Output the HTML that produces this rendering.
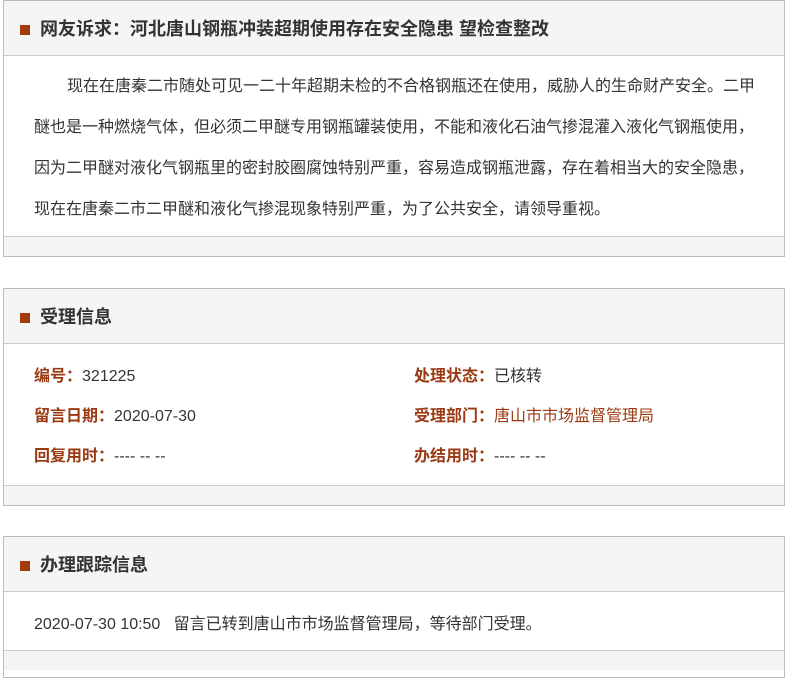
<!DOCTYPE html>
<html><head><meta charset="utf-8"><style>
body{margin:0;background:#fff;font-family:"Liberation Sans","Noto Sans CJK SC",sans-serif;color:#333;width:790px;height:660px;overflow:hidden;position:relative}
.p{position:absolute;left:3px;width:780px;border:1px solid #bbb;background:#fff}
.h{height:54px;background:#f5f5f5;border-bottom:1px solid #ccc;position:relative;font-size:18px;font-weight:bold;color:#333;line-height:56px;padding-left:36px}
.h:before{content:"";position:absolute;left:16px;top:24px;width:10px;height:10px;background:#a33a0b}
.f{height:19px;background:#f5f5f5;border-top:1px solid #ccc}
.t{font-size:16px;line-height:41px;padding:10px 26px 6px 30px;text-indent:33px}
.r{position:absolute;font-size:16px;white-space:nowrap}
.l{color:#9b3a12;font-weight:bold}
</style></head><body>
<div class="p" style="top:0;height:255px">
<div class="h">网友诉求：河北唐山钢瓶冲装超期使用存在安全隐患 望检查整改</div>
<div class="t" style="height:164px">现在在唐秦二市随处可见一二十年超期未检的不合格钢瓶还在使用，威胁人的生命财产安全。二甲醚也是一种燃烧气体，但必须二甲醚专用钢瓶罐装使用，不能和液化石油气掺混灌入液化气钢瓶使用，因为二甲醚对液化气钢瓶里的密封胶圈腐蚀特别严重，容易造成钢瓶泄露，存在着相当大的安全隐患，现在在唐秦二市二甲醚和液化气掺混现象特别严重，为了公共安全，请领导重视。</div>
<div class="f" style="position:absolute;left:0;right:0;bottom:0"></div>
</div>
<div class="p" style="top:288px;height:216px">
<div class="h">受理信息</div>
<div class="r" style="left:30px;top:73px"><span class="l">编号：</span>321225</div>
<div class="r" style="left:30px;top:113px"><span class="l">留言日期：</span>2020-07-30</div>
<div class="r" style="left:30px;top:153px"><span class="l">回复用时：</span>---- -- --</div>
<div class="r" style="left:410px;top:73px"><span class="l">处理状态：</span>已核转</div>
<div class="r" style="left:410px;top:113px"><span class="l">受理部门：</span><span style="color:#9b3a12">唐山市市场监督管理局</span></div>
<div class="r" style="left:410px;top:153px"><span class="l">办结用时：</span>---- -- --</div>
<div class="f" style="position:absolute;left:0;right:0;bottom:0"></div>
</div>
<div class="p" style="top:536px;height:140px">
<div class="h">办理跟踪信息</div>
<div class="r" style="left:30px;top:73px">2020-07-30 10:50&nbsp;&nbsp;&nbsp;留言已转到唐山市市场监督管理局，等待部门受理。</div>
<div class="f" style="position:absolute;left:0;right:0;top:113px"></div>
</div>
</body></html>
